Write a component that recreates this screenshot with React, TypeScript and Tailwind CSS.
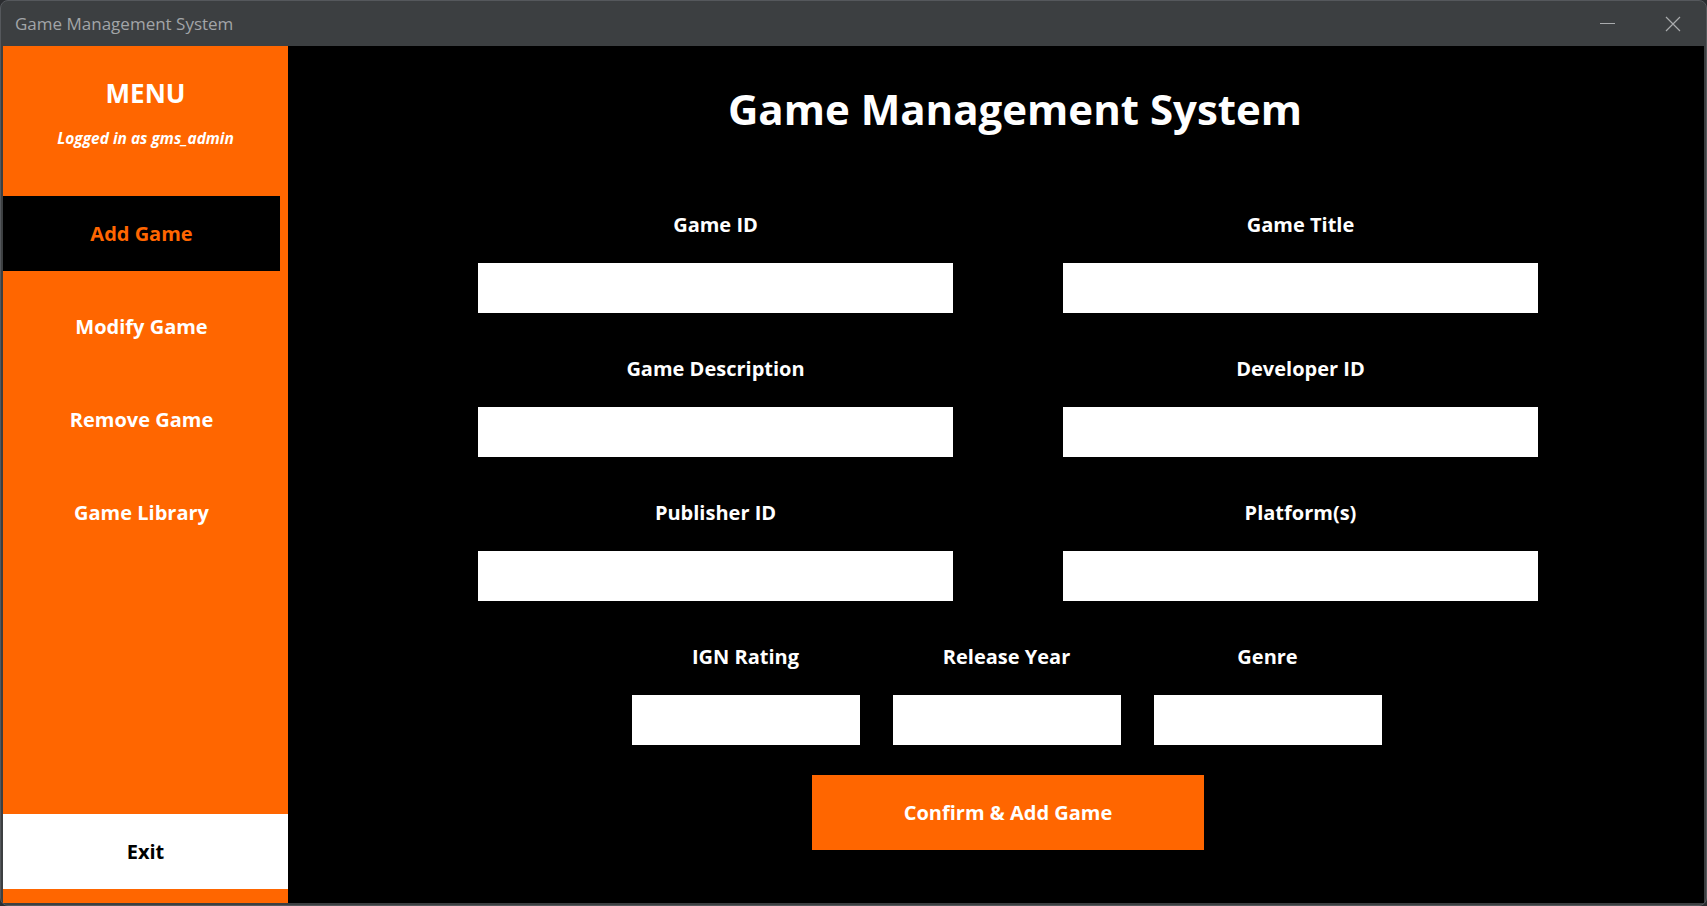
import React from "react";

// Window chrome + sidebar + add-game form
const navItems = ["Add Game", "Modify Game", "Remove Game", "Game Library"];

const Field = ({ label, width }: { label: string; width: string }) => (
  <div className={`flex flex-col items-center ${width}`}>
    <span className="text-[20px] leading-[28px] font-bold text-white">{label}</span>
    <input className="mt-[24px] h-[50px] w-full bg-white outline-none" />
  </div>
);

const App = () => {
  return (
    <div className="w-[1707px] h-[906px] bg-[#2b2d30] font-['Open_Sans',sans-serif]">
      <div className="w-full h-full rounded-[8px] border border-[#55585c] bg-[#3c3f41] flex flex-col overflow-hidden">
        {/* Title bar */}
        <div className="h-[45px] flex items-center pl-[14px] pr-[10px]">
          <span className="text-[17px] text-[#a2a5a8]">Game Management System</span>
          <div className="flex-1" />
          <div className="w-[46px] h-[45px] flex items-center justify-center mr-[20px]">
            <div className="w-[15px] h-px bg-[#a9abad]" />
          </div>
          <div className="w-[46px] h-[45px] flex items-center justify-center">
            <svg width="16" height="16" viewBox="0 0 16 16">
              <path d="M1 1 L15 15 M15 1 L1 15" stroke="#a9abad" strokeWidth="1.2" />
            </svg>
          </div>
        </div>

        <div className="flex flex-1 mx-[2px] mb-[2px]">
          {/* Sidebar */}
          <div className="w-[285px] bg-[#ff6600] flex flex-col">
            <div className="pt-[29px] text-center text-[26px] leading-[36px] font-bold text-white">MENU</div>
            <div className="mt-[17px] text-center text-[15.5px] leading-[20px] font-bold italic text-white">
              Logged in as gms_admin
            </div>
            <div className="mt-[48px] flex flex-col gap-[18px]">
              {navItems.map((item, i) => (
                <button
                  key={item}
                  className={`w-[277px] h-[75px] flex items-center justify-center text-[20px] font-bold ${
                    i === 0 ? "bg-black text-[#ff6600]" : "text-white"
                  }`}
                >
                  {item}
                </button>
              ))}
            </div>
            <button className="mt-auto mb-[14px] h-[75px] w-full bg-white text-black text-[20px] font-bold">
              Exit
            </button>
          </div>

          {/* Main */}
          <div className="flex-1 bg-black">
            <div className="ml-[190px] w-[1060px]">
              <h1 className="mt-[34px] pl-[14px] text-center text-[42px] leading-[57px] font-bold text-white">
                Game Management System
              </h1>
              <div className="mt-[74px] grid grid-cols-2 gap-x-[110px] gap-y-[42px]">
                <Field label="Game ID" width="w-full" />
                <Field label="Game Title" width="w-full" />
                <Field label="Game Description" width="w-full" />
                <Field label="Developer ID" width="w-full" />
                <Field label="Publisher ID" width="w-full" />
                <Field label="Platform(s)" width="w-full" />
              </div>
              <div className="mt-[42px] pr-[3px] flex justify-center gap-[33px]">
                <Field label="IGN Rating" width="w-[228px]" />
                <Field label="Release Year" width="w-[228px]" />
                <Field label="Genre" width="w-[228px]" />
              </div>
              <div className="mt-[30px] flex justify-center">
                <button className="w-[392px] h-[75px] bg-[#ff6600] text-white text-[20px] font-bold">
                  Confirm &amp; Add Game
                </button>
              </div>
            </div>
          </div>
        </div>
      </div>
    </div>
  );
};

export default App;
